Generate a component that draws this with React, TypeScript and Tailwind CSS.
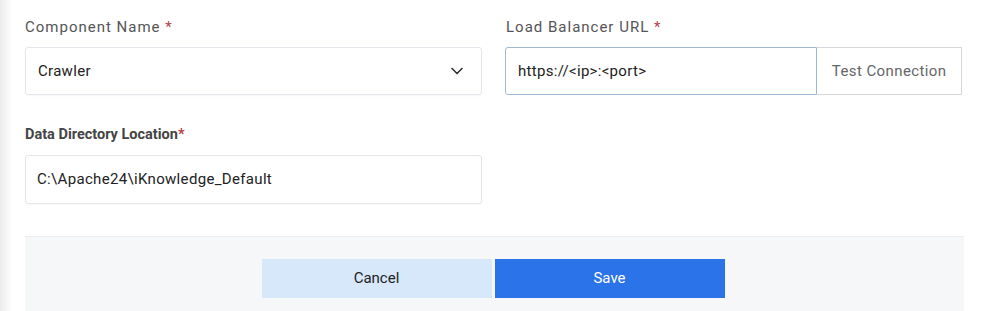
import { ChevronDown } from "lucide-react";

function Req() {
  return <span className="text-[#b3404a]">*</span>;
}

export default function App() {
  return (
    <div className="flex h-[311px] w-[989px] bg-white font-['Roboto','Liberation_Sans',sans-serif] text-[#222]">
      <div className="w-[12px] bg-gradient-to-r from-[#ececec] to-white" />
      <div className="flex flex-1 flex-col pl-[13px] pr-[25px]">
        <div className="grid grid-cols-[457px_457px] gap-x-[23px] pt-[17px]">
          <div>
            <label className="block text-[15px] leading-[20px] tracking-[1px] text-[#555]">
              Component Name <Req />
            </label>
            <div className="mt-[10px] flex h-[48px] items-center justify-between rounded-[3px] border border-[#e3e6ea] pl-[12px] pr-[14px] shadow-[0_1px_2px_rgba(0,0,0,0.04)]">
              <span className="text-[15px] tracking-[0.3px]">Crawler</span>
              <ChevronDown className="h-[20px] w-[20px] text-[#333]" strokeWidth={2} />
            </div>
          </div>
          <div>
            <label className="block pl-[1px] text-[15px] leading-[20px] tracking-[1px] text-[#555]">
              Load Balancer URL <Req />
            </label>
            <div className="mt-[10px] flex h-[48px]">
              <div className="flex w-[313px] items-center rounded-l-[3px] border border-[#9fbad0] pl-[12px] text-[15px] tracking-[0.3px]">
                https://&lt;ip&gt;:&lt;port&gt;
              </div>
              <button className="flex w-[145px] items-center justify-center border border-l-0 border-[#d5d7da] text-[15px] tracking-[0.4px] text-[#666]">
                Test Connection
              </button>
            </div>
          </div>
        </div>
        <div className="mt-[30px] w-[457px]">
          <label className="block text-[14.5px] font-bold leading-[20px] text-[#444]">
            Data Directory Location<Req />
          </label>
          <div className="mt-[10px] flex h-[49px] items-center rounded-[3px] border border-[#e3e6ea] pl-[11px] text-[15px] tracking-[0.33px] shadow-[0_1px_2px_rgba(0,0,0,0.04)]">
            C:\Apache24\iKnowledge_Default
          </div>
        </div>
        <div className="mt-[32px] flex flex-1 justify-center gap-[3px] border-t border-[#eceef1] bg-[#f6f7f9] pr-[3px] pt-[22px]">
          <button className="h-[39px] w-[230px] bg-[#d6e8fa] text-[15px] text-[#222]">Cancel</button>
          <button className="h-[39px] w-[230px] bg-[#2b73e8] text-[15px] text-white">Save</button>
        </div>
      </div>
    </div>
  );
}
